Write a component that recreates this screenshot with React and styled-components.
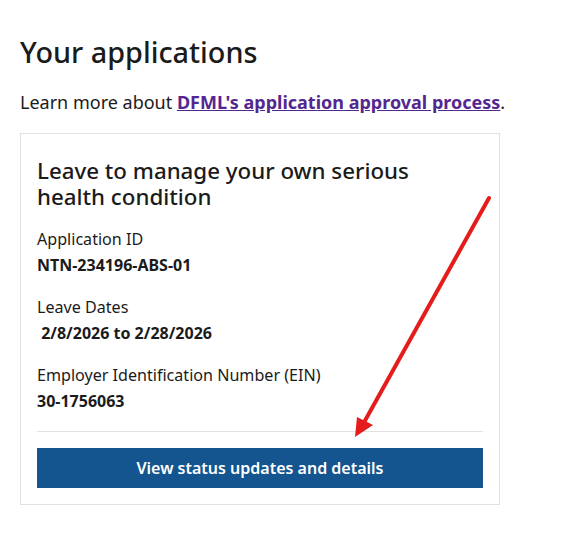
import React from "react";
import styled, { createGlobalStyle } from "styled-components";

const Global = createGlobalStyle`
  html, body { margin: 0; padding: 0; background: #fff; }
  body { font-family: "Noto Sans", "Open Sans", sans-serif; color: #1b1b1b; }
`;

const Page = styled.main`
  position: relative;
  padding: 32px 20px 20px 20px;
  width: 562px;
  box-sizing: border-box;
`;

const Title = styled.h1`
  margin: 0;
  font-size: 28.8px;
  line-height: 40px;
  font-weight: 500;
`;

const Intro = styled.p`
  margin: 16px 0 17px;
  font-size: 18px;
  line-height: 28px;
`;

const Link = styled.a`
  color: #54278f;
  font-weight: 700;
  text-decoration: underline;
`;

const Card = styled.section`
  width: 480px;
  box-sizing: border-box;
  border: 1px solid #dfe1e2;
  padding: 24px 16px 16px 16px;
`;

const CardTitle = styled.h2`
  margin: 0 0 16px;
  max-width: 400px;
  font-size: 22.3px;
  line-height: 26px;
  font-weight: 500;
`;

const Field = styled.div`
  margin-top: ${(p) => (p.$first ? "0" : "16px")};
`;

const Label = styled.div`
  font-size: 16.1px;
  line-height: 26px;
`;

const Value = styled.div`
  font-size: 16px;
  line-height: 26px;
  font-weight: 700;
`;

const Divider = styled.hr`
  border: 0;
  border-top: 1px solid #dfe1e2;
  margin: 17px 0 16px;
`;

const Button = styled.button`
  display: block;
  width: 100%;
  height: 40px;
  border: 0;
  background: #14558f;
  color: #fff;
  font-family: inherit;
  font-size: 16px;
  font-weight: 600;
  cursor: pointer;
`;

const Arrow = styled.svg`
  position: absolute;
  left: 0;
  top: 0;
  pointer-events: none;
`;

export default function App() {
  return (
    <>
      <Global />
      <Page>
        <Title>Your applications</Title>
        <Intro>
          Learn more about <Link href="#">DFML's application approval process</Link>.
        </Intro>
        <Card>
          <CardTitle>Leave to manage your own serious health condition</CardTitle>
          <Field $first>
            <Label>Application ID</Label>
            <Value>NTN-234196-ABS-01</Value>
          </Field>
          <Field>
            <Label>Leave Dates</Label>
            <Value>&nbsp;2/8/2026 to 2/28/2026</Value>
          </Field>
          <Field>
            <Label>Employer Identification Number (EIN)</Label>
            <Value>30-1756063</Value>
          </Field>
          <Divider />
          <Button>View status updates and details</Button>
        </Card>
        <Arrow width="562" height="536" viewBox="0 0 562 536">
          <line x1="489" y1="198" x2="362" y2="426" stroke="#e51c1c" strokeWidth="4" strokeLinecap="round" />
          <polygon points="355,437 357,417 373,425" fill="#e51c1c" />
        </Arrow>
      </Page>
    </>
  );
}
